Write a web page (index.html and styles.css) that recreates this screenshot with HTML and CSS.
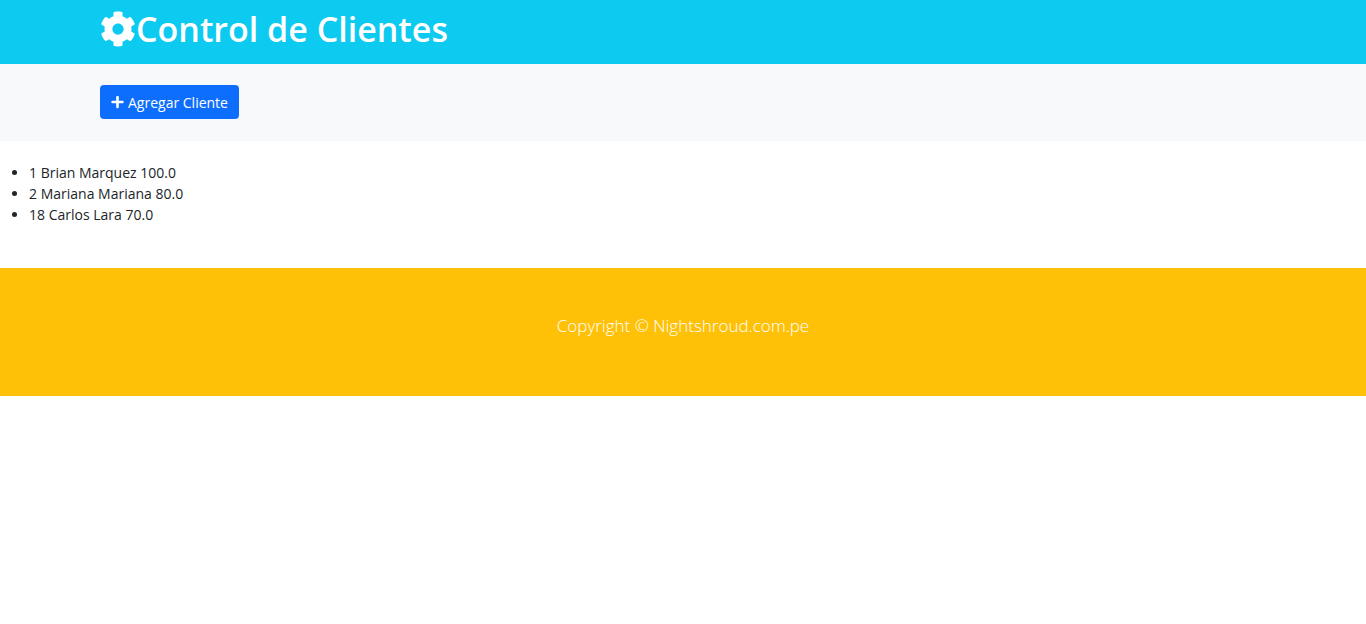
FILE: index.html
```
<!DOCTYPE html>
<html lang="es">
<head>
<meta charset="utf-8">
<meta name="viewport" content="width=device-width, initial-scale=1">
<title>Control de Clientes</title>
<link rel="stylesheet" href="styles.css">
</head>
<body>
<header class="main-header">
  <div class="container">
    <h1 class="title"><svg class="icon icon-gear" viewBox="0 0 512 512" aria-hidden="true"><path fill="currentColor" d="M487.4 315.7l-42.6-24.6c4.3-23.2 4.3-47 0-70.2l42.6-24.6c4.900-2.800 7.100-8.600 5.500-14-11.100-35.600-30-67.800-54.700-94.600-3.800-4.100-10-5.100-14.800-2.300L380.800 110c-17.900-15.400-38.500-27.300-60.800-35.100V25.800c0-5.600-3.900-10.500-9.400-11.700-36.700-8.200-74.300-7.800-109.200 0-5.500 1.200-9.400 6.100-9.400 11.700V75c-22.200 7.900-42.800 19.800-60.800 35.100L88.700 85.500c-4.900-2.800-11-1.900-14.800 2.300-24.700 26.700-43.600 58.900-54.700 94.600-1.700 5.400.6 11.200 5.500 14L67.300 221c-4.300 23.200-4.300 47 0 70.200l-42.600 24.600c-4.900 2.800-7.100 8.600-5.500 14 11.100 35.600 30 67.800 54.700 94.600 3.800 4.100 10 5.100 14.800 2.300l42.600-24.600c17.900 15.400 38.500 27.300 60.800 35.100v49.200c0 5.600 3.900 10.500 9.400 11.700 36.700 8.200 74.300 7.800 109.200 0 5.500-1.200 9.400-6.100 9.400-11.700v-49.200c22.200-7.900 42.800-19.800 60.800-35.100l42.600 24.600c4.900 2.800 11 1.900 14.800-2.300 24.700-26.700 43.600-58.900 54.700-94.600 1.500-5.500-.7-11.300-5.600-14.100zM256 336c-44.100 0-80-35.900-80-80s35.900-80 80-80 80 35.900 80 80-35.900 80-80 80z"/></svg>Control de Clientes</h1>
  </div>
</header>
<section class="actions">
  <div class="container">
    <a class="btn" href="#"><svg class="icon icon-plus" viewBox="0 0 448 512" aria-hidden="true"><path fill="currentColor" d="M416 208H272V64c0-17.670-14.330-32-32-32h-32c-17.670 0-32 14.330-32 32v144H32c-17.670 0-32 14.330-32 32v32c0 17.670 14.330 32 32 32h144v144c0 17.670 14.330 32 32 32h32c17.670 0 32-14.330 32-32V304h144c17.670 0 32-14.330 32-32v-32c0-17.670-14.330-32-32-32z"/></svg>Agregar Cliente</a>
  </div>
</section>
<main>
  <ul class="clients">
    <li>1 Brian Marquez 100.0</li>
    <li>2 Mariana Mariana 80.0</li>
    <li>18 Carlos Lara 70.0</li>
  </ul>
</main>
<footer class="main-footer">
  <p class="lead">Copyright © Nightshroud.com.pe</p>
</footer>
</body>
</html>
```
FILE: styles.css
```
* {
  box-sizing: border-box;
}

body {
  margin: 0;
  background: #fff;
  color: #212529;
  font-family: "Segoe UI", "Open Sans", "Noto Sans", sans-serif;
  font-size: 14px;
  line-height: 21px;
}

.container {
  max-width: 1188px;
  margin: 0 auto;
  padding: 0 11px;
}

.main-header {
  padding: 8px 0 14px;
  background: #0dcaf0;
  color: #fff;
}

.title {
  display: flex;
  align-items: center;
  margin: 0;
  font-size: 34px;
  font-weight: 600;
  line-height: 42px;
}

.icon {
  flex: none;
}

.icon-gear {
  width: 36px;
  height: 36px;
}

.actions {
  padding: 21px 0 22px;
  background: #f8f9fa;
}

.btn {
  display: inline-flex;
  align-items: center;
  gap: 4px;
  padding: 6px 11px;
  height: 34px;
  border-radius: 4px;
  background: #0d6efd;
  color: #fff;
  text-decoration: none;
  vertical-align: top;
}

.icon-plus {
  width: 13px;
  height: 14px;
}

.clients {
  margin: 21px 0 43px;
  padding-left: 29px;
}

.main-footer {
  padding: 44px 16px 57px;
  background: #ffc107;
  color: #fff;
  text-align: center;
}

.lead {
  margin: 0;
  font-size: 17px;
  font-weight: 300;
  line-height: 27px;
}
```
